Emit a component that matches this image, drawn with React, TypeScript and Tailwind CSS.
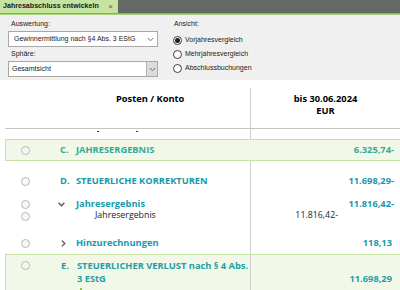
import React from "react";

const Radio = ({ checked = false }: { checked?: boolean }) => (
  <div className="w-[9px] h-[9px] rounded-full border border-[#3c3c3c] bg-white flex items-center justify-center">
    {checked && <div className="w-[5px] h-[5px] rounded-full bg-[#1e1e1e]" />}
  </div>
);

const RowRadio = () => (
  <div className="w-[9px] h-[9px] rounded-full border border-[#b8b8b8] bg-[#f7f7f7]" />
);

const Chev = ({ className = "" }: { className?: string }) => (
  <svg width="7" height="5" viewBox="0 0 7 5" className={className}>
    <path d="M0.8 1 L3.5 3.8 L6.2 1" fill="none" stroke="#6b6b6b" strokeWidth="1" />
  </svg>
);

const ChevDown = () => (
  <svg width="7" height="5" viewBox="0 0 7 5">
    <path d="M0.6 0.8 L3.5 3.8 L6.4 0.8" fill="none" stroke="#555" strokeWidth="1.3" />
  </svg>
);

const ChevRight = () => (
  <svg width="5" height="7" viewBox="0 0 5 7">
    <path d="M0.8 0.6 L3.8 3.5 L0.8 6.4" fill="none" stroke="#555" strokeWidth="1.3" />
  </svg>
);

const Spacer = ({ h, children }: { h: string; children?: React.ReactNode }) => (
  <div className={`flex ${h}`}>
    <div className="w-[245px] relative">{children}</div>
    <div className="flex-1 border-l border-[#cfcfcf]" />
  </div>
);

export default function App() {
  return (
    <div className="w-[400px] h-[290px] overflow-hidden bg-white font-['Liberation_Sans',sans-serif] text-black">
      {/* Tab bar */}
      <div className="h-[13px] bg-[#646966] flex">
        <div className="w-[118px] h-full bg-[#c6e3a1] flex items-center pl-[3px] pr-[5px]">
          <span className="text-[7.1px] font-bold leading-none whitespace-nowrap text-[#1a1a1a]">Jahresabschluss entwickeln</span>
          <span className="ml-auto text-[8px] leading-none text-[#555]">×</span>
        </div>
      </div>
      <div className="h-[1px] bg-[#7dbd42]" />
      <div className="h-[1px] bg-[#a6d476]" />

      {/* Options panel */}
      <div className="h-[65px] bg-[#f0f0f0] flex text-[7px] text-[#222]">
        <div className="w-[165px] pl-[8px] pt-[5px]">
          <div className="h-[8px] leading-[8px] pl-[3px]">Auswertung:</div>
          <div className="mt-[3px] w-[150px] h-[16px] bg-white border border-[#a8a8a8] flex items-center justify-between pl-[5px] pr-[3px]">
            <span>Gewinnermittlung nach §4 Abs. 3 EStG</span>
            <Chev />
          </div>
          <div className="mt-[3px] h-[8px] leading-[8px] pl-[3px]">Sphäre:</div>
          <div className="mt-[3px] w-[150px] h-[16px] bg-white border border-[#a8a8a8] flex items-center justify-between pl-[3px]">
            <span>Gesamtsicht</span>
            <div className="w-[11px] h-full bg-[#dcdcdc] border-l border-[#b0b0b0] flex items-center justify-center">
              <Chev />
            </div>
          </div>
        </div>
        <div className="pl-[8px] pt-[5px]">
          <div className="h-[8px] leading-[8px] pl-[1px]">Ansicht:</div>
          <div className="mt-[5px] flex flex-col">
            <div className="h-[14px] flex items-center gap-[3px]">
              <Radio checked />
              <span>Vorjahresvergleich</span>
            </div>
            <div className="h-[14px] flex items-center gap-[3px]">
              <Radio />
              <span>Mehrjahresvergleich</span>
            </div>
            <div className="h-[14px] flex items-center gap-[3px]">
              <Radio />
              <span>Abschlussbuchungen</span>
            </div>
          </div>
        </div>
      </div>

      {/* Table */}
      <div className="ml-[5px] font-['Open_Sans',sans-serif]">
        <div className="flex h-[49px] border-b border-[#c4c4c4]">
          <div className="w-[245px] pl-[111px] pt-[13px] text-[9.3px] font-bold leading-[12px]">Posten / Konto</div>
          <div className="flex-1 mt-[8px] border-l border-[#cfcfcf] pt-[5px] text-center text-[9.3px] font-bold leading-[12px]">
            <div>bis 30.06.2024</div>
            <div>EUR</div>
          </div>
        </div>

        <Spacer h="h-[10px]">
          <div className="absolute top-[2px] left-[92px] w-[2px] h-[1px] bg-[#333]" />
          <div className="absolute top-[2px] left-[131px] w-[2px] h-[1px] bg-[#333]" />
        </Spacer>

        {/* Row C */}
        <div className="flex h-[22px] border border-r-0 border-[#c6e3a4] bg-[#f1f8e7] text-[#34aa98] text-[9.3px] font-bold">
          <div className="w-[244px] flex items-center">
            <div className="w-[54px] pl-[15px]"><RowRadio /></div>
            <div className="w-[16px]">C.</div>
            <div>JAHRESERGEBNIS</div>
          </div>
          <div className="flex-1 flex items-center justify-end pr-[6px]">6.325,74-</div>
        </div>

        <Spacer h="h-[9px]" />

        {/* Row D */}
        <div className="flex h-[22px] text-[#1899aa] text-[9.3px] font-bold">
          <div className="w-[245px] flex items-center">
            <div className="w-[55px] pl-[16px]"><RowRadio /></div>
            <div className="w-[16px]">D.</div>
            <div className="whitespace-nowrap">STEUERLICHE KORREKTUREN</div>
          </div>
          <div className="flex-1 border-l border-[#cfcfcf] flex items-center justify-end pr-[6px]">11.698,29-</div>
        </div>

        <Spacer h="h-[6px]" />

        {/* Jahresergebnis */}
        <div className="flex h-[12px] text-[#1899aa] text-[9.3px] font-bold">
          <div className="w-[245px] flex items-center">
            <div className="w-[53px] pl-[16px]"><RowRadio /></div>
            <div className="w-[18px] flex items-center"><ChevDown /></div>
            <div>Jahresergebnis</div>
          </div>
          <div className="flex-1 border-l border-[#cfcfcf] flex items-center justify-end pr-[6px]">11.816,42-</div>
        </div>
        <div className="flex h-[12px] text-[#1a1a1a] text-[8.8px]">
          <div className="w-[245px] flex items-center">
            <div className="w-[90px] pl-[16px]"><RowRadio /></div>
            <div>Jahresergebnis</div>
          </div>
          <div className="flex-1 border-l border-[#cfcfcf] flex items-center justify-end pr-[62px]">11.816,42-</div>
        </div>

        <Spacer h="h-[10px]" />

        {/* Hinzurechnungen */}
        <div className="flex h-[22px] text-[#1899aa] text-[9.3px] font-bold">
          <div className="w-[245px] flex items-center">
            <div className="w-[56px] pl-[16px]"><RowRadio /></div>
            <div className="w-[15px] flex items-center"><ChevRight /></div>
            <div>Hinzurechnungen</div>
          </div>
          <div className="flex-1 border-l border-[#cfcfcf] flex items-center justify-end pr-[8px]">118,13</div>
        </div>

        {/* Row E */}
        <div className="flex h-[40px] border-t border-l border-[#c6e3a4] bg-[#f1f8e7] text-[#1f9fa6] text-[9.3px] font-bold leading-[13px]">
          <div className="w-[244px] flex pt-[4px] relative">
            <div className="w-[54px] pl-[15px] h-[13px] flex items-center"><RowRadio /></div>
            <div className="w-[17px] pl-[1px]">E.</div>
            <div className="whitespace-nowrap">STEUERLICHER VERLUST nach § 4 Abs.<br />3 EStG</div>
            <div className="absolute left-[74px] top-[33px] w-[2px] h-[2px] bg-[#8cc63f]" />
          </div>
          <div className="flex-1 border-l border-[#cfcfcf] pt-[17px] text-right pr-[8px]">11.698,29</div>
        </div>
      </div>
    </div>
  );
}
